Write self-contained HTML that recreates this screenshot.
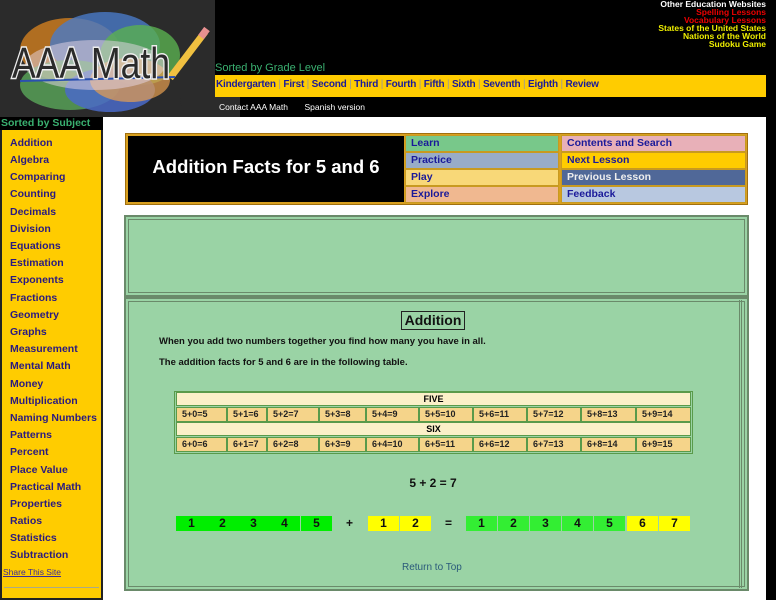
<!DOCTYPE html>
<html><head><meta charset="utf-8"><style>
*{margin:0;padding:0;box-sizing:border-box}
body{width:776px;height:600px;background:#000;position:relative;overflow:hidden;font-family:"Liberation Sans",Arial,sans-serif}
.a{position:absolute}
.side a{position:absolute;left:8px;font-size:10.5px;font-weight:bold;color:#2a1a80;text-decoration:none}
.nav{position:absolute;font-size:10.5px;font-weight:bold;color:#1a1a9a;padding-left:5px;line-height:15px;border:1px solid #c89a20}
.fc{position:absolute;height:15px;background:#f5d48a;border:1px solid #5a9a4a;font-size:9px;font-weight:bold;color:#222;padding-left:5px;line-height:13px}
.hd{position:absolute;left:176px;width:515px;height:14px;background:#fbf0c8;border:1px solid #5a9a4a;font-size:9px;font-weight:bold;text-align:center;line-height:12px}
.b{position:absolute;top:516px;height:15px;width:31px;font-size:12px;font-weight:bold;text-align:center;line-height:15px;color:#111}
.g{background:#00ee00}.g2{background:#33ee33}.y{background:#ffff00}
.s{color:#999;font-weight:normal}
</style></head><body>
<div class="a" style="left:0;top:0;width:215px;height:117px;background:#2b2b2b"></div>
<svg class="a" style="left:0;top:0" width="215" height="117">
<ellipse cx="70" cy="50" rx="50" ry="32" fill="#c87a20" opacity=".85"/>
<ellipse cx="105" cy="45" rx="55" ry="33" fill="#4a7ac8" opacity=".8"/>
<ellipse cx="140" cy="55" rx="40" ry="30" fill="#5ab050" opacity=".8"/>
<ellipse cx="70" cy="85" rx="50" ry="25" fill="#5aa85a" opacity=".8"/>
<ellipse cx="110" cy="90" rx="45" ry="22" fill="#4a6ac8" opacity=".85"/>
<ellipse cx="130" cy="80" rx="40" ry="22" fill="#e8a050" opacity=".7"/>
<ellipse cx="95" cy="65" rx="70" ry="25" fill="#e8d8e8" opacity=".5"/>
<line x1="170" y1="78" x2="205" y2="32" stroke="#f0c040" stroke-width="7"/>
<line x1="201" y1="37" x2="207" y2="29" stroke="#e89090" stroke-width="7"/>
<line x1="20" y1="81" x2="175" y2="77" stroke="#2a50b0" stroke-width="2"/>
<text x="12" y="78" font-family="Liberation Sans" font-size="44" textLength="158" lengthAdjust="spacingAndGlyphs" fill="#2b2b2b" stroke="#eee" stroke-width="3" paint-order="stroke">AAA Math</text>
</svg>
<div class="a" style="right:10px;top:0;text-align:right;font-size:8.5px;font-weight:bold;line-height:8px">
<div style="color:#fff">Other Education Websites</div>
<div style="color:#e00">Spelling Lessons</div>
<div style="color:#e00">Vocabulary Lessons</div>
<div style="color:#ee0">States of the United States</div>
<div style="color:#ee0">Nations of the World</div>
<div style="color:#ee0">Sudoku Game</div>
</div>
<div class="a" style="left:215px;top:62px;font-size:11px;color:#3ab070">Sorted by Grade Level</div>
<div class="a" style="left:215px;top:75px;width:551px;height:22px;background:#ffcc00;font-size:10px;font-weight:bold;color:#1a1a9a;line-height:19px;padding-left:1px;white-space:nowrap;letter-spacing:-0.2px">Kindergarten <span class="s">|</span> First <span class="s">|</span> Second <span class="s">|</span> Third <span class="s">|</span> Fourth <span class="s">|</span> Fifth <span class="s">|</span> Sixth <span class="s">|</span> Seventh <span class="s">|</span> Eighth <span class="s">|</span> Review</div>
<div class="a" style="left:180px;top:97px;width:60px;height:30px;background:#2b2b2b;border-radius:0 0 0 40px"></div>
<div class="a" style="left:219px;top:102px;font-size:8.5px;color:#fff">Contact AAA Math &nbsp; &nbsp; &nbsp; Spanish version</div>
<div class="a" style="left:103px;top:117px;width:663px;height:483px;background:#fff"></div>
<div class="a" style="left:0;top:117px;width:103px;height:13px;background:#000;color:#3ab070;font-size:10.5px;font-weight:bold;padding-left:1px;line-height:13px">Sorted by Subject</div>
<div class="a side" style="left:0;top:130px;width:103px;height:470px;background:#ffcc00;border:2px solid #222;border-top:0">
<a style="top:7px">Addition</a><a style="top:24px">Algebra</a><a style="top:41px">Comparing</a><a style="top:58px">Counting</a><a style="top:76px">Decimals</a><a style="top:93px">Division</a><a style="top:110px">Equations</a><a style="top:127px">Estimation</a><a style="top:144px">Exponents</a><a style="top:162px">Fractions</a><a style="top:179px">Geometry</a><a style="top:196px">Graphs</a><a style="top:213px">Measurement</a><a style="top:230px">Mental Math</a><a style="top:248px">Money</a><a style="top:265px">Multiplication</a><a style="top:282px">Naming Numbers</a><a style="top:299px">Patterns</a><a style="top:316px">Percent</a><a style="top:334px">Place Value</a><a style="top:351px">Practical Math</a><a style="top:368px">Properties</a><a style="top:385px">Ratios</a><a style="top:402px">Statistics</a><a style="top:419px">Subtraction</a>
<a style="top:437px;left:1px;font-size:8.5px;font-weight:normal;text-decoration:underline;color:#3a2a9a">Share This Site</a>
<div style="position:absolute;left:2px;right:2px;top:457px;border-top:1px solid #aa8;"></div>
</div>
<div class="a" style="left:125px;top:133px;width:623px;height:72px;background:#d8a020;border:1px solid #a07010"></div>
<div class="a" style="left:128px;top:136px;width:276px;height:66px;background:#000;color:#fff;font-size:18.5px;font-weight:bold;text-align:center;line-height:62px">Addition Facts for 5 and 6</div>
<div class="nav" style="left:405px;top:135px;width:154px;background:#78c88a">Learn</div>
<div class="nav" style="left:405px;top:152px;width:154px;background:#98acc8">Practice</div>
<div class="nav" style="left:405px;top:169px;width:154px;background:#f8d878">Play</div>
<div class="nav" style="left:405px;top:186px;width:154px;background:#f0b890">Explore</div>
<div class="nav" style="left:561px;top:135px;width:185px;background:#e8b0b8">Contents and Search</div>
<div class="nav" style="left:561px;top:152px;width:185px;background:#ffcc00">Next Lesson</div>
<div class="nav" style="left:561px;top:169px;width:185px;background:#506898;color:#eee">Previous Lesson</div>
<div class="nav" style="left:561px;top:186px;width:185px;background:#b8c8e0">Feedback</div>
<div class="a" style="left:124px;top:215px;width:625px;height:82px;background:#9ad3a5;border:2px solid #6a8a6a;box-shadow:inset 0 0 0 2px #9ad3a5,inset 0 0 0 3px #6a8a6a"></div>
<div class="a" style="left:124px;top:297px;width:625px;height:294px;background:#9ad3a5;border:2px solid #6a8a6a;box-shadow:inset 0 0 0 2px #9ad3a5,inset 0 0 0 3px #6a8a6a"></div>
<div class="a" style="left:739px;top:300px;width:3px;height:288px;border-left:1px solid #6a8a6a;border-right:1px solid #6a8a6a"></div>
<div class="a" style="left:401px;top:311px;width:64px;height:19px;border:1px solid #222;font-size:14px;font-weight:bold;text-align:center;line-height:17px;color:#111">Addition</div>
<div class="a" style="left:159px;top:336px;font-size:9.5px;font-weight:bold;color:#111">When you add two numbers together you find how many you have in all.</div>
<div class="a" style="left:159px;top:357px;font-size:9.5px;font-weight:bold;color:#111">The addition facts for 5 and 6 are in the following table.</div>
<div class="a" style="left:174px;top:391px;width:519px;height:63px;background:#9ad3a5;border:1px solid #5a9a4a"></div>
<div class="hd" style="top:392px">FIVE</div>
<div class="hd" style="top:422px">SIX</div>
<div class="fc" style="top:407px;left:176px;width:51px">5+0=5</div><div class="fc" style="top:407px;left:227px;width:40px">5+1=6</div><div class="fc" style="top:407px;left:267px;width:52px">5+2=7</div><div class="fc" style="top:407px;left:319px;width:47px">5+3=8</div><div class="fc" style="top:407px;left:366px;width:53px">5+4=9</div><div class="fc" style="top:407px;left:419px;width:54px">5+5=10</div><div class="fc" style="top:407px;left:473px;width:54px">5+6=11</div><div class="fc" style="top:407px;left:527px;width:54px">5+7=12</div><div class="fc" style="top:407px;left:581px;width:55px">5+8=13</div><div class="fc" style="top:407px;left:636px;width:55px">5+9=14</div>
<div class="fc" style="top:437px;left:176px;width:51px">6+0=6</div><div class="fc" style="top:437px;left:227px;width:40px">6+1=7</div><div class="fc" style="top:437px;left:267px;width:52px">6+2=8</div><div class="fc" style="top:437px;left:319px;width:47px">6+3=9</div><div class="fc" style="top:437px;left:366px;width:53px">6+4=10</div><div class="fc" style="top:437px;left:419px;width:54px">6+5=11</div><div class="fc" style="top:437px;left:473px;width:54px">6+6=12</div><div class="fc" style="top:437px;left:527px;width:54px">6+7=13</div><div class="fc" style="top:437px;left:581px;width:55px">6+8=14</div><div class="fc" style="top:437px;left:636px;width:55px">6+9=15</div>
<div class="a" style="left:380px;top:476px;width:106px;text-align:center;font-size:12px;font-weight:bold;color:#111">5 + 2 = 7</div>
<div class="b g" style="left:176px">1</div><div class="b g" style="left:207px">2</div><div class="b g" style="left:238px">3</div><div class="b g" style="left:269px">4</div><div class="b g" style="left:301px">5</div>
<div class="b" style="left:334px">+</div>
<div class="b y" style="left:368px">1</div><div class="b y" style="left:400px">2</div>
<div class="b" style="left:433px">=</div>
<div class="b g2" style="left:466px">1</div><div class="b g2" style="left:498px">2</div><div class="b g2" style="left:530px">3</div><div class="b g2" style="left:562px">4</div><div class="b g2" style="left:594px">5</div><div class="b y" style="left:627px">6</div><div class="b y" style="left:659px">7</div>
<div class="a" style="left:402px;top:562px;font-size:10px;color:#2a5a7a">Return to Top</div>
</body></html>
